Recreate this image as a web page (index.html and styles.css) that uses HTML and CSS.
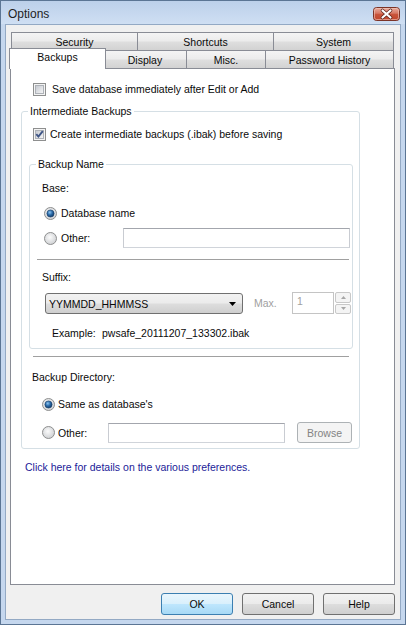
FILE: index.html
```html
<!DOCTYPE html>
<html>
<head>
<meta charset="utf-8">
<title>Options</title>
<link rel="stylesheet" href="styles.css">
</head>
<body>
<svg class="defs" width="0" height="0" aria-hidden="true">
  <defs>
    <linearGradient id="cbg" x1="0" y1="0" x2="1" y2="1">
      <stop offset="0" stop-color="#c4c8cf"/>
      <stop offset="1" stop-color="#f7f7f7"/>
    </linearGradient>
    <radialGradient id="rbg" cx="0.45" cy="0.4" r="0.6">
      <stop offset="0" stop-color="#fbfbfb"/>
      <stop offset="1" stop-color="#cfd1d4"/>
    </radialGradient>
    <radialGradient id="rdot" cx="0.4" cy="0.35" r="0.7">
      <stop offset="0" stop-color="#8cc4f0"/>
      <stop offset="0.5" stop-color="#2a6aa8"/>
      <stop offset="1" stop-color="#0e3560"/>
    </radialGradient>
    <linearGradient id="xbg" x1="0" y1="0" x2="0" y2="1">
      <stop offset="0" stop-color="#eab0a2"/>
      <stop offset="0.45" stop-color="#d77763"/>
      <stop offset="0.5" stop-color="#c9553c"/>
      <stop offset="1" stop-color="#c0452b"/>
    </linearGradient>
  </defs>
</svg>
<div class="window">
  <div class="titlebar">
    <span class="title">Options</span>
    <svg class="close" width="27" height="14" viewBox="0 0 27 14">
      <rect x="0.5" y="0.5" width="26" height="13" rx="3" fill="url(#xbg)" stroke="#7b3326"/>
      <rect x="1.5" y="1.5" width="24" height="11" rx="2" fill="none" stroke="#f2c9bf" stroke-opacity="0.6"/>
      <path d="M9.5 3.5 L17.5 10.5 M17.5 3.5 L9.5 10.5" stroke="#5a2018" stroke-width="3.6" stroke-linecap="round"/>
      <path d="M9.5 3.5 L17.5 10.5 M17.5 3.5 L9.5 10.5" stroke="#ffffff" stroke-width="2.2" stroke-linecap="round"/>
    </svg>
  </div>
  <div class="client">
    <div class="tabrow row1">
      <div class="tab t-security">Security</div>
      <div class="tab t-shortcuts">Shortcuts</div>
      <div class="tab t-system">System</div>
    </div>
    <div class="tabrow row2">
      <div class="tab sel t-backups">Backups</div>
      <div class="tab t-display">Display</div>
      <div class="tab t-misc">Misc.</div>
      <div class="tab t-history">Password History</div>
    </div>
    <div class="panel">
      <div class="row r-save">
        <svg class="cb" width="13" height="13" viewBox="0 0 13 13">
          <rect x="0.5" y="0.5" width="12" height="12" fill="#f4f4f4" stroke="#8e8f8f"/>
          <rect x="2.5" y="2.5" width="8" height="8" fill="url(#cbg)" stroke="#aeb2b8"/>
        </svg>
        <span class="lbl">Save database immediately after Edit or Add</span>
      </div>
      <fieldset class="grp g-inter">
        <legend>Intermediate Backups</legend>
        <div class="row r-create">
          <svg class="cb" width="13" height="13" viewBox="0 0 13 13">
            <rect x="0.5" y="0.5" width="12" height="12" fill="#f4f4f4" stroke="#8e8f8f"/>
            <rect x="2.5" y="2.5" width="8" height="8" fill="url(#cbg)" stroke="#aeb2b8"/>
            <path d="M3.3 6.2 L5.4 8.6 L9.8 3.2" fill="none" stroke="#3e5586" stroke-width="1.9"/>
          </svg>
          <span class="lbl">Create intermediate backups (.ibak) before saving</span>
        </div>
        <fieldset class="grp g-name">
          <legend>Backup Name</legend>
          <div class="txt t-base">Base:</div>
          <div class="row r-db">
            <svg class="rb" width="13" height="13" viewBox="0 0 13 13">
              <circle cx="6.5" cy="6.5" r="6" fill="url(#rbg)" stroke="#8e8f8f"/>
              <circle cx="6.5" cy="6.5" r="3.6" fill="url(#rdot)" stroke="#163d66" stroke-width="0.6"/>
            </svg>
            <span class="lbl">Database name</span>
          </div>
          <div class="row r-other1">
            <svg class="rb" width="13" height="13" viewBox="0 0 13 13">
              <circle cx="6.5" cy="6.5" r="6" fill="url(#rbg)" stroke="#8e8f8f"/>
            </svg>
            <span class="lbl l-other1">Other:</span>
            <span class="input in-name"></span>
          </div>
          <div class="sep sep1"></div>
          <div class="txt t-suffix">Suffix:</div>
          <div class="row r-select">
            <div class="select">
              <span>YYMMDD_HHMMSS</span>
              <svg width="7" height="4" viewBox="0 0 7 4"><path d="M0 0 H7 L3.5 4 Z" fill="#000"/></svg>
            </div>
            <span class="dis l-max">Max.</span>
            <span class="spin-in">1</span>
            <span class="spin">
              <span class="spin-b"><svg width="5" height="3" viewBox="0 0 5 3"><path d="M0 3 H5 L2.5 0 Z" fill="#a6a6a6"/></svg></span>
              <span class="spin-b"><svg width="5" height="3" viewBox="0 0 5 3"><path d="M0 0 H5 L2.5 3 Z" fill="#a6a6a6"/></svg></span>
            </span>
          </div>
          <div class="row r-example">
            <span class="l-example">Example:</span>
            <span>pwsafe_20111207_133302.ibak</span>
          </div>
        </fieldset>
        <div class="sep sep2"></div>
        <div class="txt t-bdir">Backup Directory:</div>
        <div class="row r-same">
          <svg class="rb" width="13" height="13" viewBox="0 0 13 13">
            <circle cx="6.5" cy="6.5" r="6" fill="url(#rbg)" stroke="#8e8f8f"/>
            <circle cx="6.5" cy="6.5" r="3.6" fill="url(#rdot)" stroke="#163d66" stroke-width="0.6"/>
          </svg>
          <span class="lbl">Same as database's</span>
        </div>
        <div class="row r-other2">
          <svg class="rb" width="13" height="13" viewBox="0 0 13 13">
            <circle cx="6.5" cy="6.5" r="6" fill="url(#rbg)" stroke="#8e8f8f"/>
          </svg>
          <span class="lbl l-other2">Other:</span>
          <span class="input in-dir"></span>
          <span class="btn btn-dis">Browse</span>
        </div>
      </fieldset>
      <div class="link">Click here for details on the various preferences.</div>
    </div>
    <div class="buttons">
      <span class="btn btn-def">OK</span>
      <span class="btn">Cancel</span>
      <span class="btn">Help</span>
    </div>
  </div>
</div>
</body>
</html>
```

FILE: styles.css
```css
* { box-sizing: border-box; }
html, body { margin: 0; padding: 0; }
body {
  font-family: "Liberation Sans", Arial, sans-serif;
  font-size: 10.5px;
  color: #0a0a0a;
  background: #fff;
}
.defs { position: absolute; width: 0; height: 0; }

.window {
  width: 406px;
  height: 625px;
  border: 1px solid #5b7594;
  background: #c5d7ee;
  display: flex;
  flex-direction: column;
  padding: 0 4px 4px 4px;
}
.titlebar {
  height: 23px;
  margin: 0 -4px;
  padding: 0 5px 0 7px;
  display: flex;
  justify-content: space-between;
  background: linear-gradient(#bcd0ea, #cfdff3);
}
.title {
  font-size: 12px;
  line-height: 14px;
  margin-top: 6px;
  color: #1e1e1e;
}
.close { margin-top: 6px; display: block; }

.client {
  flex: 1;
  background: #f0f0f0;
  border: 1px solid #93a9c4;
  padding: 7px 4px 0 4px;
  display: flex;
  flex-direction: column;
}

/* tabs */
.tabrow { display: flex; height: 18px; margin-left: 1px; }
.tab {
  height: 18px;
  border: 1px solid #898c95;
  border-bottom: none;
  background: linear-gradient(#f4f4f4, #ececec 45%, #dedede 55%, #d2d2d2);
  text-align: center;
  line-height: 15px;
  padding-top: 2px;
  margin-left: -1px;
  white-space: nowrap;
  font-size: 10.5px;
}
.row1 .tab:first-child { margin-left: 0; }
.t-security { width: 127px; }
.t-shortcuts { width: 137px; }
.t-system { width: 121px; }
.row2 .tab { border-top: 1px solid #898c95; }
.t-backups { width: 97px; }
.t-display { width: 84px; margin-left: -3px; }
.t-misc { width: 80px; }
.t-history { width: 129px; }
.tab.sel {
  position: relative;
  z-index: 1;
  height: 21px;
  margin-top: -2px;
  margin-bottom: -1px;
  margin-left: -2px;
  background: #fff;
  padding-top: 1px;
}

.panel {
  width: 385px;
  height: 517px;
  background: #fff;
  border: 1px solid #898c95;
  padding-top: 12px;
}

.row { display: flex; align-items: center; white-space: nowrap; }
.txt { line-height: 14px; white-space: nowrap; }
.cb, .rb { display: block; flex: none; }

.r-save { height: 16px; margin-left: 22px; }
.r-save .lbl { margin-left: 6px; }

.grp {
  margin: 0;
  padding: 0;
  border: 1px solid #d5dfe5;
  border-radius: 3px;
  min-width: 0;
}
.grp legend {
  line-height: 14px;
  padding: 0 2px;
  margin-left: 6px;
}
.g-inter { margin: 7px 0 0 10px; width: 339px; padding-bottom: 5px; }
.r-create { height: 16px; margin: 8px 0 0 11px; }
.r-create .lbl { margin-left: 4px; }

.g-name { margin: 15px 0 0 7px; width: 324px; padding-bottom: 8px; }
.t-base { margin: 10px 0 0 12px; }
.r-db { height: 16px; margin: 10px 0 0 14px; }
.r-db .lbl, .r-other1 .lbl { margin-left: 4px; }
.r-other1 { height: 20px; margin: 7px 0 0 14px; }
.l-other1 { width: 62px; }
.input {
  display: block;
  height: 20px;
  background: #fff;
  border: 1px solid #abadb3;
  border-color: #a3a6ad #c9ccd2 #d0d4da #c9ccd2;
}
.in-name { width: 227px; }

.sep { height: 1px; background: #a0a0a0; }
.sep1 { margin: 11px 3px 0 7px; }
.t-suffix { margin: 10px 0 0 12px; }

.r-select { height: 22px; margin: 8px 0 0 15px; align-items: flex-start; }
.select {
  width: 198px;
  height: 21px;
  margin-top: 1px;
  border: 1px solid #707070;
  border-radius: 3px;
  background: linear-gradient(#f2f2f2, #ebebeb 48%, #dddddd 52%, #cfcfcf);
  display: flex;
  align-items: center;
  justify-content: space-between;
  padding: 0 6px 0 3px;
}
.select svg { display: block; }
.dis { color: #a0a0a0; }
.l-max { width: 49px; line-height: 22px; padding-left: 11px; }
.spin-in {
  width: 42px;
  height: 22px;
  border: 1px solid #c4c4c4;
  background: #fff;
  color: #a0a0a0;
  padding: 1px 0 0 4px;
  line-height: 14px;
}
.spin {
  width: 16px;
  height: 22px;
  margin-left: 1px;
  display: flex;
  flex-direction: column;
  gap: 1px;
}
.spin-b {
  flex: 1;
  border: 1px solid #c8c8c8;
  border-radius: 2px;
  background: #f4f4f4;
  display: flex;
  align-items: center;
  justify-content: center;
}
.spin-b svg { display: block; }

.r-example { height: 14px; margin: 12px 0 0 22px; }
.l-example { width: 50px; }

.sep2 { margin: 7px 10px 0 11px; }
.t-bdir { margin: 13px 0 0 10px; }
.r-same { height: 16px; margin: 12px 0 0 20px; }
.r-same .lbl, .r-other2 .lbl { margin-left: 3px; }
.r-other2 { height: 21px; margin: 10px 0 0 20px; }
.l-other2 { width: 50px; }
.in-dir { width: 177px; }

.btn {
  display: flex;
  align-items: center;
  justify-content: center;
  height: 21px;
  width: 72px;
  border: 1px solid #707070;
  border-radius: 3px;
  background: linear-gradient(#f2f2f2, #ebebeb 48%, #dddddd 52%, #cfcfcf);
  white-space: nowrap;
}
.btn-dis {
  width: 55px;
  margin-left: 12px;
  border-color: #adb2b5;
  background: #f4f4f4;
  color: #838383;
}
.link {
  color: #1b1b98;
  line-height: 14px;
  margin: 11px 0 0 14px;
}

.buttons {
  display: flex;
  justify-content: flex-end;
  gap: 9px;
  margin-top: 8px;
  padding-right: 1px;
}
.buttons .btn { height: 22px; }
.btn-def {
  border-color: #3c7fb1;
  background: linear-gradient(#eaf6fd, #d9f0fc 48%, #bee6fd 52%, #a7d9f5);
}
```
